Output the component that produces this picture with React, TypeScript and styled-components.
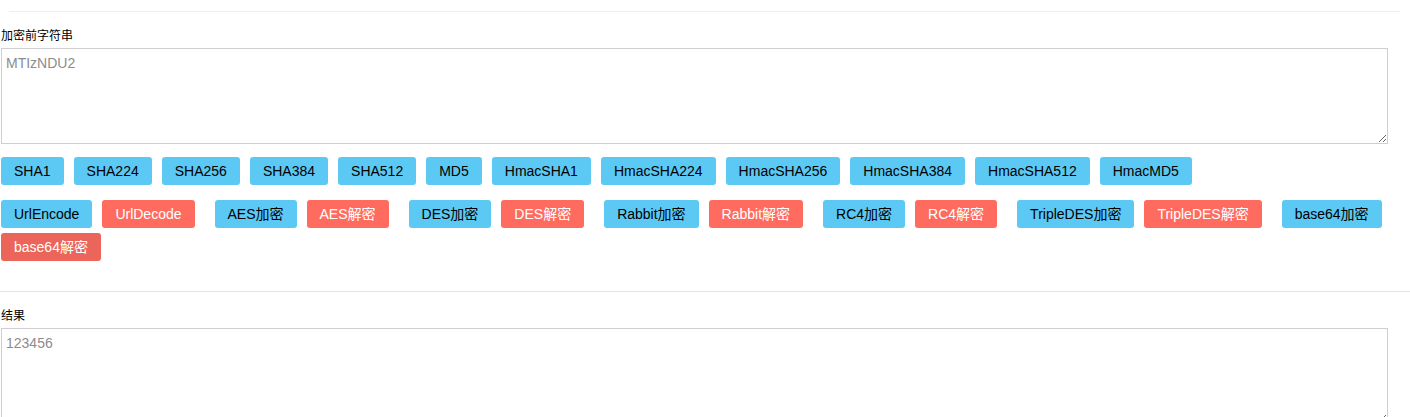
import { createGlobalStyle } from 'styled-components';
import styled from 'styled-components';

const GlobalStyle = createGlobalStyle`
  html, body {
    margin: 0;
    padding: 0;
    background: #fff;
  }
  body {
    font-family: 'Liberation Sans', 'Noto Sans CJK SC', Arial, sans-serif;
    color: #000;
  }
`;

const Page = styled.div`
  width: 1410px;
  padding: 0 0 0 1px;
  box-sizing: border-box;
`;

const Rule = styled.hr<{ $inset?: boolean }>`
  border: 0;
  height: 1px;
  background: ${({ $inset }) => ($inset ? '#eeeeee' : '#e2e2e2')};
  margin: ${({ $inset }) => ($inset ? '11px 10px 0 8px' : '25px 0 0 -1px')};
`;

const Label = styled.div<{ $top: number }>`
  font-size: 12px;
  line-height: 17px;
  margin-top: ${({ $top }) => $top}px;
  margin-bottom: 3px;
`;

const Field = styled.textarea`
  display: block;
  width: 1387px;
  height: 96px;
  box-sizing: border-box;
  margin: 0;
  border: 1px solid #cfcfcf;
  padding: 4px 4px;
  font-family: 'Liberation Sans', 'Noto Sans CJK SC', Arial, sans-serif;
  font-size: 14px;
  line-height: 20px;
  color: #333;
  outline: none;

  &::placeholder {
    color: #8c8c8c;
  }
`;

const ButtonRow = styled.div<{ $top: number }>`
  display: flex;
  flex-wrap: wrap;
  width: 1409px;
  margin-top: ${({ $top }) => $top}px;
`;

const Btn = styled.button<{ $tone: 'blue' | 'red' | 'redDark'; $gap: number }>`
  height: 28px;
  padding: 0 13px;
  margin: 0 ${({ $gap }) => $gap}px 5px 0;
  border: none;
  border-radius: 3px;
  font-family: 'Liberation Sans', 'Noto Sans CJK SC', Arial, sans-serif;
  font-size: 14px;
  line-height: 28px;
  white-space: nowrap;
  cursor: pointer;
  background: ${({ $tone }) =>
    $tone === 'blue' ? '#5bc9f4' : $tone === 'red' ? '#ff6c5f' : '#ec655a'};
  color: ${({ $tone }) => ($tone === 'blue' ? '#000' : '#fff')};
`;

const hashes = [
  'SHA1',
  'SHA224',
  'SHA256',
  'SHA384',
  'SHA512',
  'MD5',
  'HmacSHA1',
  'HmacSHA224',
  'HmacSHA256',
  'HmacSHA384',
  'HmacSHA512',
  'HmacMD5',
];

const pairs: [string, string][] = [
  ['UrlEncode', 'UrlDecode'],
  ['AES加密', 'AES解密'],
  ['DES加密', 'DES解密'],
  ['Rabbit加密', 'Rabbit解密'],
  ['RC4加密', 'RC4解密'],
  ['TripleDES加密', 'TripleDES解密'],
  ['base64加密', 'base64解密'],
];

export default function App() {
  return (
    <Page>
      <GlobalStyle />
      <Rule $inset />
      <Label $top={16}>加密前字符串</Label>
      <Field placeholder='MTIzNDU2' />

      <ButtonRow $top={13}>
        {hashes.map((h) => (
          <Btn key={h} $tone='blue' $gap={10}>
            {h}
          </Btn>
        ))}
      </ButtonRow>

      <ButtonRow $top={10}>
        {pairs.map(([enc, dec], i) => [
          <Btn key={enc} $tone='blue' $gap={10}>
            {enc}
          </Btn>,
          <Btn key={dec} $tone={i === pairs.length - 1 ? 'redDark' : 'red'} $gap={20}>
            {dec}
          </Btn>,
        ])}
      </ButtonRow>

      <Rule />
      <Label $top={16}>结果</Label>
      <Field placeholder='123456' />
    </Page>
  );
}
